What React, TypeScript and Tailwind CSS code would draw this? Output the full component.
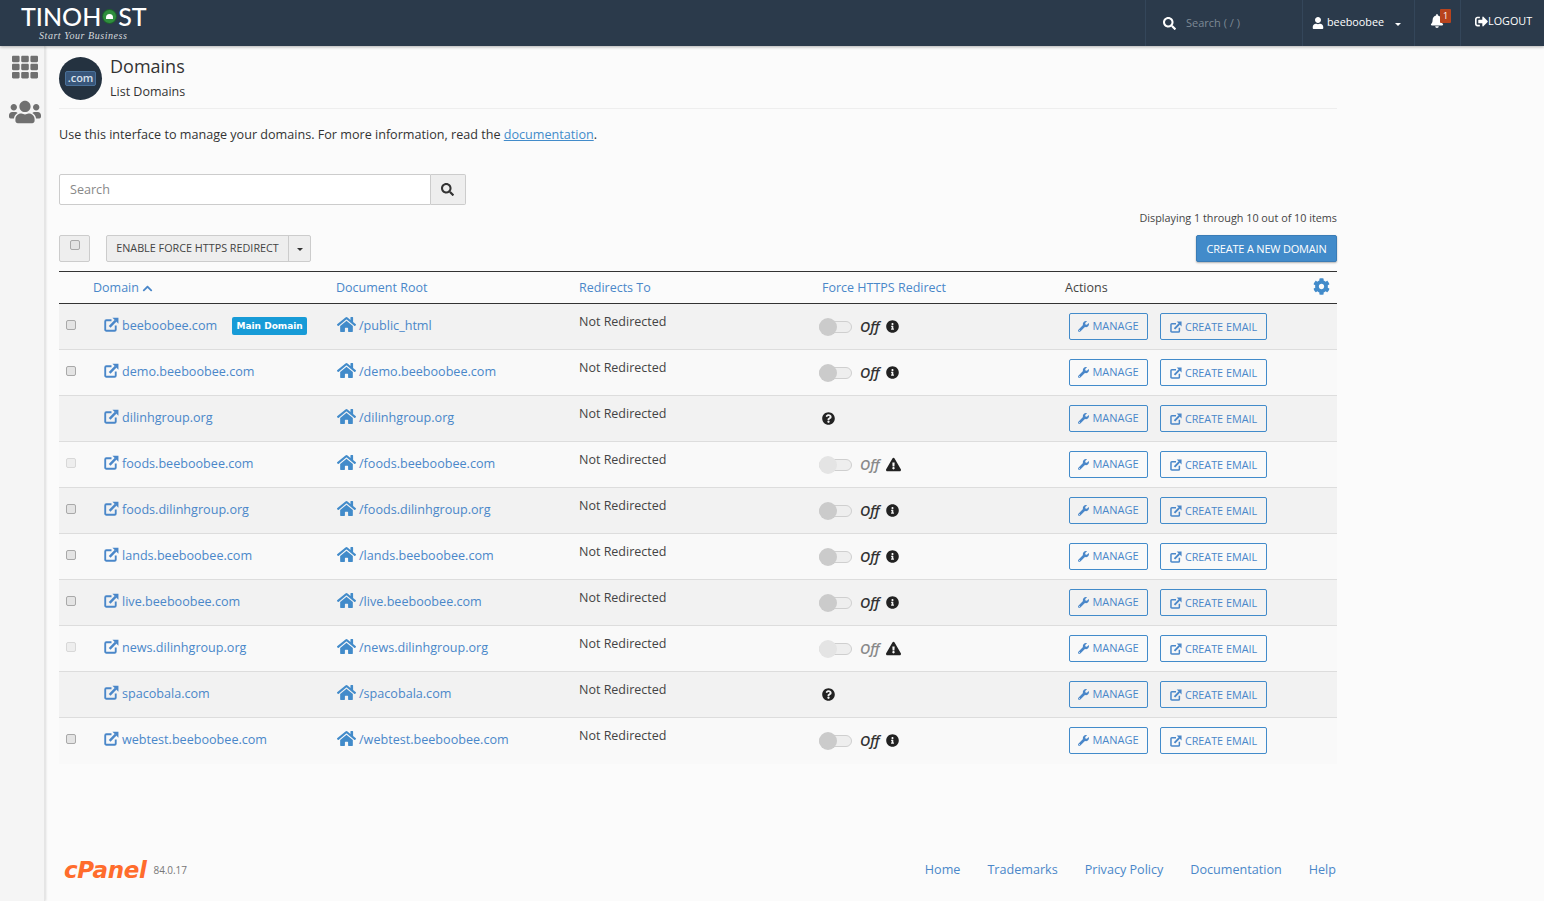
import { FaHome, FaCog, FaWrench, FaSearch, FaUser, FaBell, FaInfoCircle, FaQuestionCircle, FaExclamationTriangle, FaChevronUp, FaTh, FaUsers, FaSignOutAlt } from 'react-icons/fa';

type Row = {
  domain: string;
  root: string;
  https: 'off' | 'unknown' | 'disabled';
  main?: boolean;
};

const rows: Row[] = [
  { domain: 'beeboobee.com', root: '/public_html', https: 'off', main: true },
  { domain: 'demo.beeboobee.com', root: '/demo.beeboobee.com', https: 'off' },
  { domain: 'dilinhgroup.org', root: '/dilinhgroup.org', https: 'unknown' },
  { domain: 'foods.beeboobee.com', root: '/foods.beeboobee.com', https: 'disabled' },
  { domain: 'foods.dilinhgroup.org', root: '/foods.dilinhgroup.org', https: 'off' },
  { domain: 'lands.beeboobee.com', root: '/lands.beeboobee.com', https: 'off' },
  { domain: 'live.beeboobee.com', root: '/live.beeboobee.com', https: 'off' },
  { domain: 'news.dilinhgroup.org', root: '/news.dilinhgroup.org', https: 'disabled' },
  { domain: 'spacobala.com', root: '/spacobala.com', https: 'unknown' },
  { domain: 'webtest.beeboobee.com', root: '/webtest.beeboobee.com', https: 'off' },
];

function LinkIcon({ className }: { className?: string }) {
  return (
    <svg viewBox="0 0 16 16" className={className} fill="none" stroke="currentColor">
      <path d="M8 3.5H2.5a1.2 1.2 0 0 0-1.2 1.2v8.8a1.2 1.2 0 0 0 1.2 1.2h8.8a1.2 1.2 0 0 0 1.2-1.2V9" strokeWidth="2" />
      <path d="M6 10.5 12.5 3.8" strokeWidth="2.6" />
      <path d="M9 .8h6.4v6.4z" fill="currentColor" stroke="none" />
    </svg>
  );
}

function CheckBox({ disabled }: { disabled?: boolean }) {
  return (
    <span className={`block w-[10px] h-[10px] rounded-[2px] border ${disabled ? 'border-[#d8d8d8] bg-[#eeeeee]' : 'border-[#a9a9a9] bg-[#e4e4e4]'}`} />
  );
}

function Toggle({ disabled }: { disabled?: boolean }) {
  return (
    <span className="relative block w-[33px] h-[12px] mt-[2px] rounded-full border border-[#cfcfcf] bg-[#eeeeee]">
      <span className={`absolute left-[-1px] top-[-4px] w-[18px] h-[18px] rounded-full ${disabled ? 'bg-[#e4e4e4]' : 'bg-[#cbcbcb]'}`} />
    </span>
  );
}

function HttpsCell({ state }: { state: Row['https'] }) {
  if (state === 'unknown') {
    return <FaQuestionCircle className="text-[13px] text-[#222222] mt-[2px]" />;
  }
  const disabled = state === 'disabled';
  return (
    <div className="flex items-center ml-[-3px]">
      <Toggle disabled={disabled} />
      <span className={`ml-[8px] text-[14px] italic font-semibold leading-none mt-[2px] ${disabled ? 'text-[#8a8a8a]' : 'text-[#333333]'}`}>Off</span>
      {disabled ? (
        <FaExclamationTriangle className="ml-[6px] text-[15px] text-[#222222]" />
      ) : (
        <FaInfoCircle className="ml-[6px] text-[13px] text-[#222222]" />
      )}
    </div>
  );
}

function DomainRow({ row, index, last }: { row: Row; index: number; last: boolean }) {
  return (
    <div className={`grid grid-cols-[34px_243px_243px_243px_243px_272px] h-[46px] ${last ? '' : 'border-b border-[#dddddd]'} ${index % 2 === 0 ? 'bg-[#f2f2f2]' : 'bg-[#f9f9f9]'}`}>
      <div className="pl-[7px] pt-[16px]">
        {row.https !== 'unknown' && <CheckBox disabled={row.https === 'disabled'} />}
      </div>
      <div className="flex items-start pl-[11px] pt-[12px] text-[12.6px] leading-[20px] text-[#4a87c9]">
        <LinkIcon className="w-[15px] h-[15px] mt-[1px] mr-[3px] shrink-0" />
        <span>{row.domain}</span>
        {row.main && (
          <span className="ml-[15px] mt-[1px] h-[18px] w-[75px] rounded-[2px] bg-[#179bd7] text-white text-[9px] font-bold leading-[18px] text-center font-['DejaVu_Sans',sans-serif]">Main Domain</span>
        )}
      </div>
      <div className="flex items-start pl-[1px] pt-[12px] text-[12.6px] leading-[20px] text-[#4a87c9]">
        <FaHome className="text-[19px] mt-[-1px] mr-[3px] shrink-0 text-[#428bca]" />
        <span>{row.root}</span>
      </div>
      <div className="pt-[8px] text-[12.5px] leading-[20px] text-[#444444]">Not Redirected</div>
      <div className="flex items-start pt-[14px]">
        <HttpsCell state={row.https} />
      </div>
      <div className="flex items-start pl-[4px] pt-[9px] gap-[12px]">
        <button className="flex items-center justify-center w-[79px] h-[27px] pb-[1px] border border-[#428bca] rounded-[2px] text-[#4a87c9] text-[11px] uppercase">
          <FaWrench className="text-[11px] mr-[3px]" />
          Manage
        </button>
        <button className="flex items-center justify-center w-[107px] h-[27px] pt-[1px] border border-[#428bca] rounded-[2px] text-[#4a87c9] text-[10.8px] uppercase">
          <LinkIcon className="w-[12px] h-[12px] mr-[3px]" />
          Create Email
        </button>
      </div>
    </div>
  );
}

export default function App() {
  return (
    <div className="h-[901px] overflow-hidden bg-[#fbfbfb] text-[#333333] font-['Open_Sans',sans-serif]">
      {/* Top bar */}
      <header className="relative z-10 flex h-[46px] bg-[#2b3a4b] shadow-[0_1px_3px_rgba(0,0,0,0.3)] text-white">
        <div className="pl-[21px] pt-[3px] w-[1145px]">
          <div className="flex items-center h-[26px] text-[25px] leading-none font-medium font-['Lato',sans-serif]">
            TINOH
            <span className="inline-flex items-center justify-center w-[15px] h-[15px] mx-[1px] rounded-full bg-[#2f8f3e] border border-[#1c5d2a]">
              <span className="w-[7px] h-[5px] rounded-t-full bg-white" />
            </span>
            ST
          </div>
          <div className="pl-[18px] pt-[1px] text-[10px] leading-[12px] italic text-[#d5d9dd] font-['Liberation_Serif',serif] tracking-[0.55px]">Start Your Business</div>
        </div>
        <div className="flex items-center w-[157px] border-l border-[#34465a] pl-[17px]">
          <FaSearch className="text-[13px] mr-[10px]" />
          <span className="text-[11px] text-[#7d8995]">Search ( / )</span>
        </div>
        <div className="flex items-center w-[112px] border-l border-[#34465a] pl-[9px] pb-[1px] text-[10.8px]">
          <FaUser className="text-[12px] mr-[3px]" />
          beeboobee
          <span className="ml-[11px] w-0 h-0 border-x-[3px] border-x-transparent border-t-[3px] border-t-white mt-[3px]" />
        </div>
        <div className="relative w-[46px] border-l border-[#34465a]">
          <FaBell className="absolute left-[15px] top-[14px] text-[14px]" />
          <span className="absolute left-[25px] top-[9px] w-[11px] h-[14px] rounded-[1px] bg-[#b8431d] text-[9px] leading-[14px] text-center">1</span>
        </div>
        <div className="flex items-center flex-1 border-l border-[#34465a] pl-[14px] pb-[3px] text-[10.8px]">
          <FaSignOutAlt className="text-[13px]" />
          LOGOUT
        </div>
      </header>

      <div className="flex h-[855px]">
        {/* Sidebar */}
        <aside className="flex flex-col items-center w-[45px] shrink-0 bg-[#f5f5f5] border-r border-[#e5e5e5] shadow-[1px_0_2px_rgba(0,0,0,0.12)] text-[#707070] pl-[5px]">
          <FaTh className="text-[26px] mt-[8px]" />
          <FaUsers className="text-[32px] mt-[16px]" />
        </aside>

        <main className="w-[1278px] ml-[14px] shrink-0">
          {/* Page title */}
          <div className="flex h-[63px] border-b border-[#eeeeee]">
            <div className="flex items-center justify-center w-[43px] h-[43px] mt-[11px] rounded-full bg-[#243240]">
              <span className="px-[2px] h-[15px] rounded-[2px] bg-[#38567a] border border-[#4a7199] text-[11px] leading-[12px] font-semibold text-[#d8e2ec]">.com</span>
            </div>
            <div className="ml-[8px]">
              <h1 className="mt-[8px] text-[18px] leading-[25px] text-[#333333]">Domains</h1>
              <div className="mt-[3px] text-[12.5px] leading-[20px]">List Domains</div>
            </div>
          </div>

          <p className="mt-[16px] text-[12.6px] leading-[20px]">
            Use this interface to manage your domains. For more information, read the{' '}
            <a className="text-[#428bca] underline">documentation</a>.
          </p>

          {/* Search */}
          <div className="flex mt-[29px] w-[407px] h-[31px]">
            <div className="flex-1 flex items-center pl-[10px] pt-[1px] border border-[#cccccc] rounded-l-[2px] bg-white text-[12.6px] text-[#888888]">Search</div>
            <div className="flex items-center justify-center w-[35px] border border-l-0 border-[#cccccc] rounded-r-[2px] bg-[#eeeeee] text-[#333333]">
              <FaSearch className="text-[13px] ml-[-1px]" />
            </div>
          </div>

          <div className="mt-[5px] text-right text-[10.8px] leading-[16px] text-[#444444]">Displaying 1 through 10 out of 10 items</div>

          {/* Toolbar */}
          <div className="flex items-start justify-between mt-[9px] h-[27px]">
            <div className="flex">
              <div className="w-[31px] h-[27px] pl-[10px] pt-[4px] border border-[#cccccc] rounded-[2px] bg-[#eeeeee]">
                <CheckBox />
              </div>
              <div className="flex ml-[16px] h-[27px] border border-[#cccccc] rounded-[2px] bg-[#eeeeee]">
                <span className="w-[182px] text-center text-[10.8px] leading-[24px] text-[#444444] border-r border-[#cccccc]">ENABLE FORCE HTTPS REDIRECT</span>
                <span className="flex items-center justify-center w-[21px]">
                  <span className="w-0 h-0 mt-[1px] border-x-[3px] border-x-transparent border-t-[3px] border-t-[#333333]" />
                </span>
              </div>
            </div>
            <button className="w-[141px] h-[27px] pt-[1px] rounded-[2px] bg-[#428bca] border border-[#3a7cb6] shadow-[0_1px_2px_rgba(0,0,0,0.3)] text-white text-[11px] font-medium tracking-[-0.2px]">CREATE A NEW DOMAIN</button>
          </div>

          {/* Table */}
          <div className="mt-[9px] border-t border-[#333333]">
            <div className="grid grid-cols-[34px_243px_243px_243px_243px_272px] h-[32px] pt-[2px] items-center border-b border-[#333333] text-[12.5px] text-[#4a87c9]">
              <div />
              <div className="flex items-center">
                Domain
                <FaChevronUp className="text-[11px] ml-[3px]" />
              </div>
              <div>Document Root</div>
              <div>Redirects To</div>
              <div>Force HTTPS Redirect</div>
              <div className="flex items-center justify-between pr-[7px] text-[#444444]">
                Actions
                <FaCog className="text-[17px] text-[#428bca] mt-[-4px]" />
              </div>
            </div>
            {rows.map((row, i) => (
              <DomainRow key={row.domain} row={row} index={i} last={i === rows.length - 1} />
            ))}
          </div>

          {/* Footer */}
          <footer className="flex items-center justify-between mt-[91px] h-[30px]">
            <div className="flex items-end ml-[5px]">
              <span className="text-[23px] leading-[26px] font-bold italic text-[#ff6c2c] font-['DejaVu_Sans',sans-serif] tracking-[-0.3px]">cPanel</span>
              <span className="ml-[7px] mb-[5px] text-[10px] tracking-[-0.1px] text-[#777777]">84.0.17</span>
            </div>
            <nav className="flex gap-[27px] pr-[1px] text-[12.6px] text-[#4a87c9]">
              <a>Home</a>
              <a>Trademarks</a>
              <a>Privacy Policy</a>
              <a>Documentation</a>
              <a>Help</a>
            </nav>
          </footer>
        </main>
      </div>
    </div>
  );
}
